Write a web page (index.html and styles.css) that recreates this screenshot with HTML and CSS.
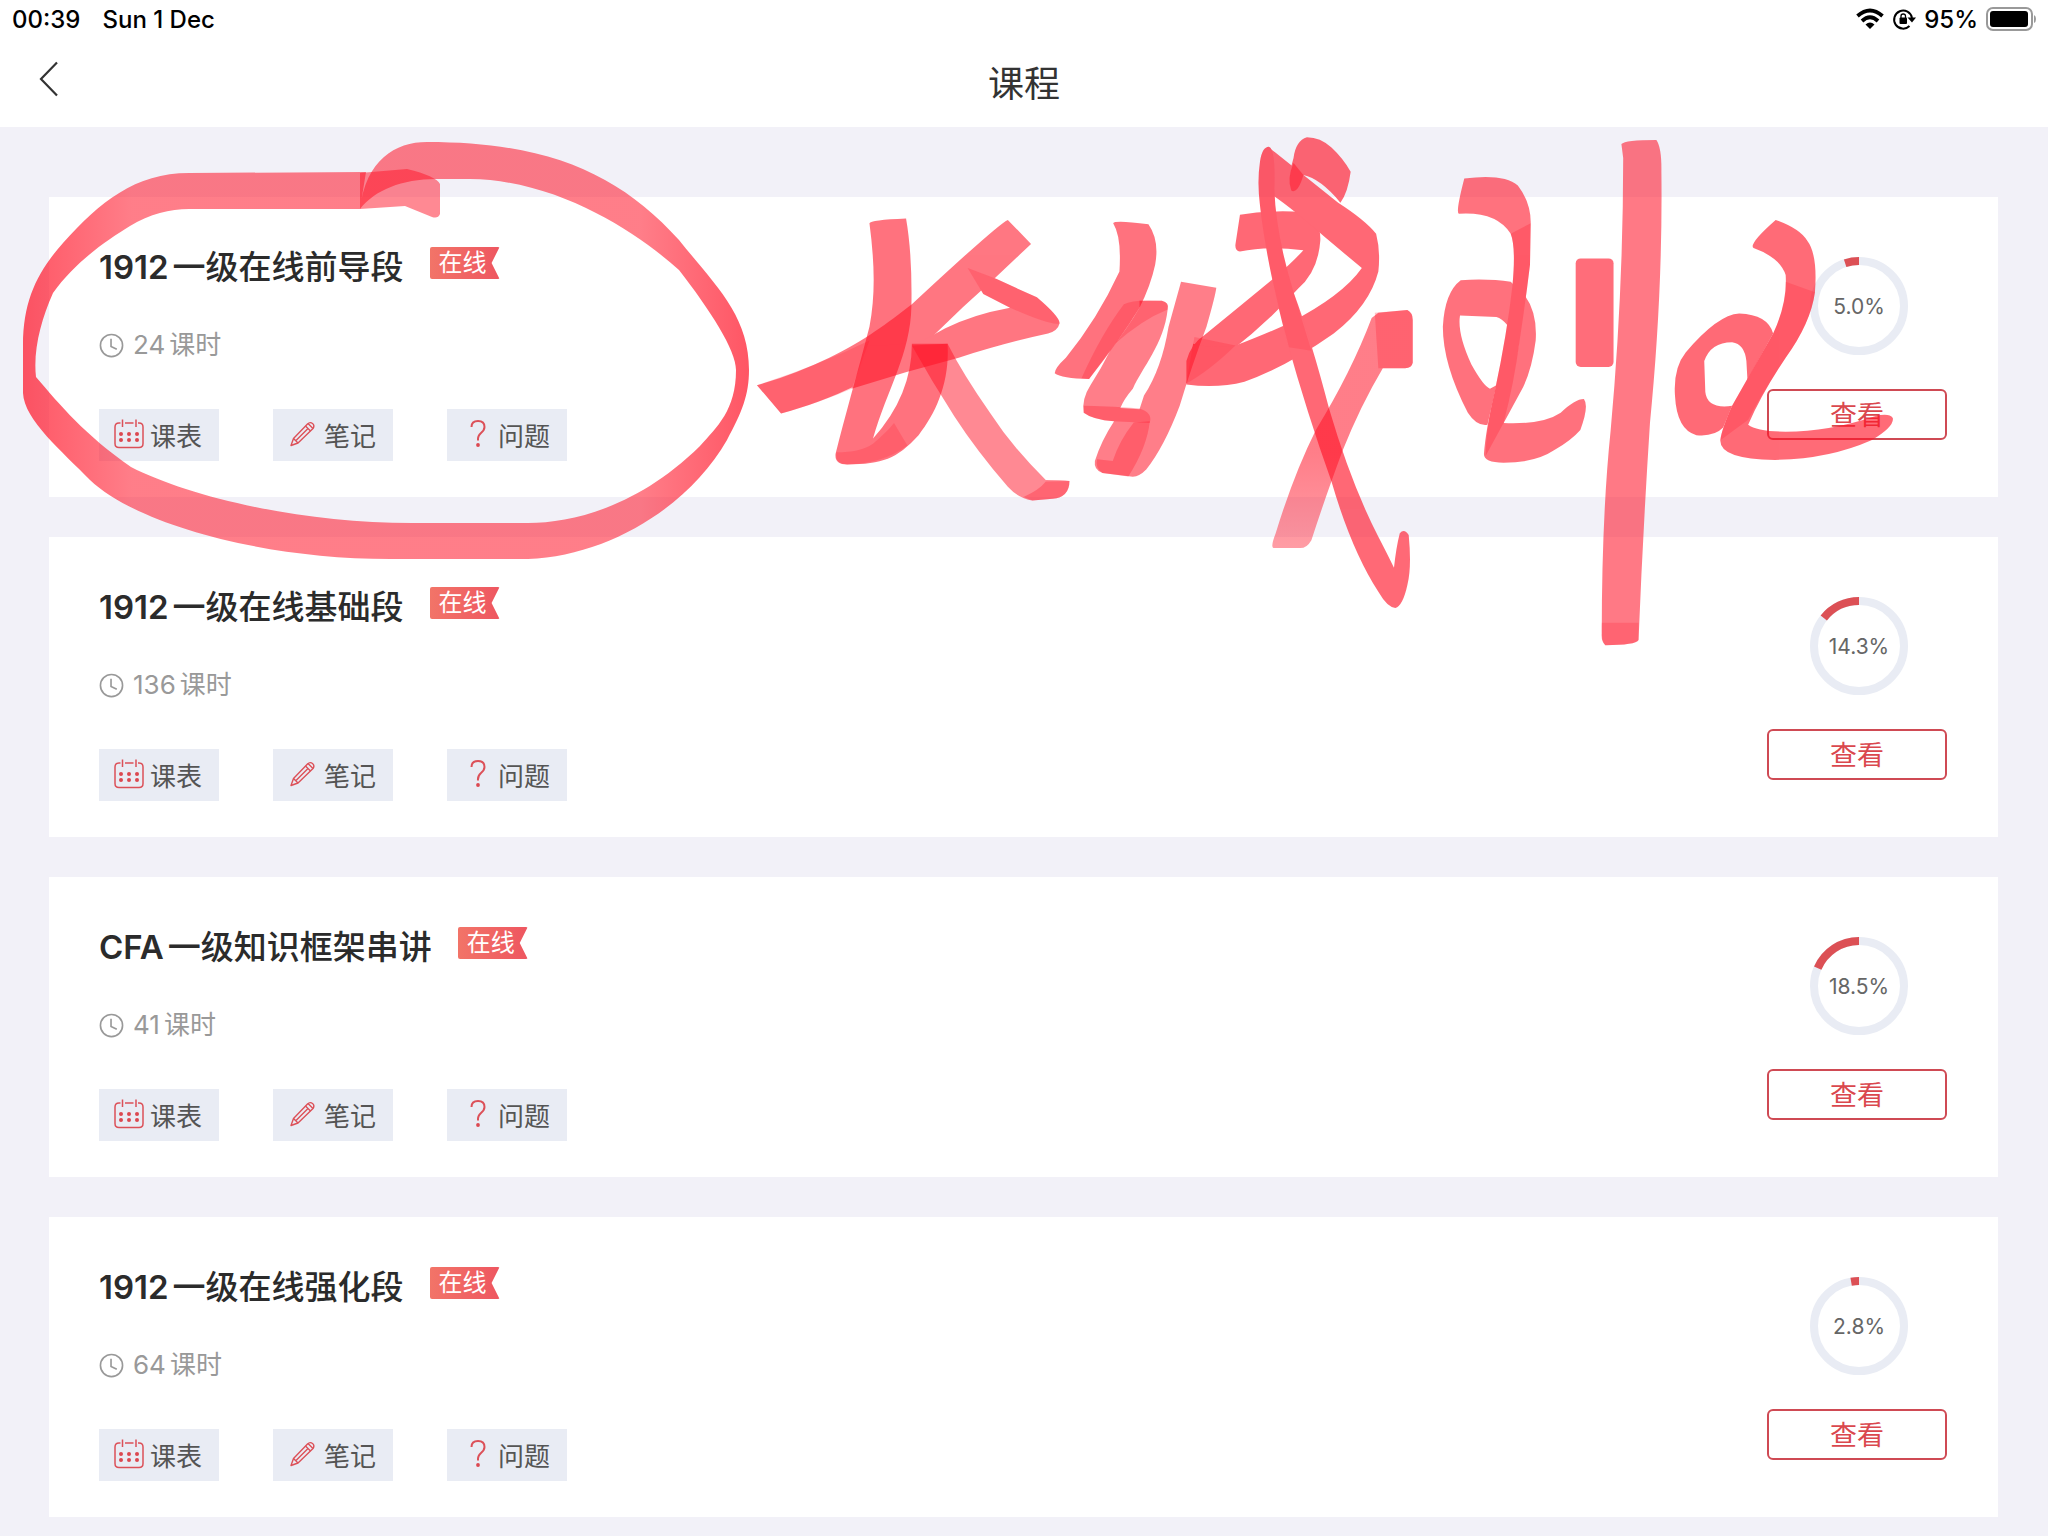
FILE: index.html
```html
<!DOCTYPE html>
<html lang="zh-CN">
<head>
<meta charset="utf-8">
<meta name="viewport" content="width=device-width, initial-scale=1">
<title>课程</title>
<link rel="stylesheet" href="styles.css">
</head>
<body>
<svg class="sprite" aria-hidden="true">
  <symbol id="i-clock" viewBox="0 0 26 26"><g fill="none" stroke="#999" stroke-width="1.7"><circle cx="13" cy="13" r="11.5"/><path d="M12.5 6v8l6 3"/></g></symbol>
  <symbol id="i-cal" viewBox="0 0 30 30"><path d="M6.500 4H5Q1 4 1 8v16.500q0 4 4 4h20q4 0 4-4V8q0-4-4-4h-1M11 4h8.500M8.500.500V8M22 .500V8" fill="none" stroke="#dc5058" stroke-width="1.500"/><g fill="#dc4850"><circle cx="7" cy="15" r="2"/><circle cx="15" cy="15" r="2"/><circle cx="23" cy="15" r="2"/><circle cx="7" cy="21" r="2"/><circle cx="15" cy="21" r="2"/><circle cx="23" cy="21" r="2"/></g></symbol>
  <symbol id="i-pen" viewBox="0 0 30 30"><g fill="none" stroke="#dc5058" stroke-width="1.400" stroke-linejoin="round"><path d="M3 26.500 5.500 19.500 19.500 5Q22 2.500 24.500 4.500T25 9.500L10 24Z"/><path d="M5.500 19.500 10 24M8 21.500 20 9.500M17.500 7l5 5M20 4.500l5 5"/></g></symbol>
  <symbol id="i-q" viewBox="0 0 30 30"><path d="M9.500 8Q9.500 2 16 2t6.500 6q0 3-3.500 6t-3 7.500" fill="none" stroke="#dc5058" stroke-width="2"/><circle cx="16" cy="26" r="1.900" fill="#dc4850"/></symbol>
</svg>

<header class="top">
  <div class="status">
    <span>00:39</span><span>Sun 1 Dec</span>
    <div class="status-right">
      <svg width="28" height="22" viewBox="0 0 28 22"><g fill="none" stroke="#000" stroke-width="3.800"><path d="M1.500 8Q14-3 26.500 8"/><path d="M6 13Q14 5.500 22 13"/></g><path d="M9.500 16.500Q14 12.500 18.500 16.500L14 21Z"/></svg>
      <svg width="24" height="24" viewBox="0 0 24 24"><path d="M17.500 19A9 9 0 1 1 20 11" fill="none" stroke="#000" stroke-width="2"/><path d="M15.500 10.500H24L20 15.500Z"/><rect x="7.500" y="10.500" width="7.500" height="6.500" rx="1"/><path d="M9 11V9q0-2 2.200-2T13.500 9v2" fill="none" stroke="#000" stroke-width="1.300"/></svg>
      <span>95%</span>
      <svg width="50" height="26" viewBox="0 0 50 26"><rect x="1" y="2" width="45" height="22" rx="6" fill="none" stroke="#999" stroke-width="2"/><rect x="4" y="5" width="38" height="16" rx="3"/><path d="M48 9q2 1 2 4t-2 4Z" fill="#999"/></svg>
    </div>
  </div>
  <nav class="nav">
    <button class="back" type="button" aria-label="返回"><svg width="20" height="36" viewBox="0 0 20 36"><path d="M18 1.500 2 18 18 34.500" fill="none" stroke="#333" stroke-width="2.200"/></svg></button>
    <h1>课程</h1>
  </nav>
</header>

<main class="list">
  <article class="card">
    <div class="info">
      <div class="head"><h2><span class="num">1912</span>一级在线前导段</h2><span class="tag">在线</span></div>
      <p class="hours"><svg class="clock"><use href="#i-clock"/></svg><span><span class="num">24</span>课时</span></p>
      <div class="actions">
        <button type="button"><svg><use href="#i-cal"/></svg>课表</button>
        <button type="button"><svg><use href="#i-pen"/></svg>笔记</button>
        <button type="button"><svg><use href="#i-q"/></svg>问题</button>
      </div>
    </div>
    <div class="side">
      <div class="ring"><svg viewBox="0 0 98 98"><circle class="track" cx="49" cy="49" r="45"/><circle class="bar" cx="49" cy="49" r="45" pathLength="100" stroke-dasharray="5 100" transform="matrix(0 -1 -1 0 98 98)"/></svg><span>5.0%</span></div>
      <button class="view" type="button">查看</button>
    </div>
  </article>
  <article class="card">
    <div class="info">
      <div class="head"><h2><span class="num">1912</span>一级在线基础段</h2><span class="tag">在线</span></div>
      <p class="hours"><svg class="clock"><use href="#i-clock"/></svg><span><span class="num">136</span>课时</span></p>
      <div class="actions">
        <button type="button"><svg><use href="#i-cal"/></svg>课表</button>
        <button type="button"><svg><use href="#i-pen"/></svg>笔记</button>
        <button type="button"><svg><use href="#i-q"/></svg>问题</button>
      </div>
    </div>
    <div class="side">
      <div class="ring"><svg viewBox="0 0 98 98"><circle class="track" cx="49" cy="49" r="45"/><circle class="bar" cx="49" cy="49" r="45" pathLength="100" stroke-dasharray="14.3 100" transform="matrix(0 -1 -1 0 98 98)"/></svg><span>14.3%</span></div>
      <button class="view" type="button">查看</button>
    </div>
  </article>
  <article class="card">
    <div class="info">
      <div class="head"><h2><span class="num">CFA</span>一级知识框架串讲</h2><span class="tag">在线</span></div>
      <p class="hours"><svg class="clock"><use href="#i-clock"/></svg><span><span class="num">41</span>课时</span></p>
      <div class="actions">
        <button type="button"><svg><use href="#i-cal"/></svg>课表</button>
        <button type="button"><svg><use href="#i-pen"/></svg>笔记</button>
        <button type="button"><svg><use href="#i-q"/></svg>问题</button>
      </div>
    </div>
    <div class="side">
      <div class="ring"><svg viewBox="0 0 98 98"><circle class="track" cx="49" cy="49" r="45"/><circle class="bar" cx="49" cy="49" r="45" pathLength="100" stroke-dasharray="18.5 100" transform="matrix(0 -1 -1 0 98 98)"/></svg><span>18.5%</span></div>
      <button class="view" type="button">查看</button>
    </div>
  </article>
  <article class="card">
    <div class="info">
      <div class="head"><h2><span class="num">1912</span>一级在线强化段</h2><span class="tag">在线</span></div>
      <p class="hours"><svg class="clock"><use href="#i-clock"/></svg><span><span class="num">64</span>课时</span></p>
      <div class="actions">
        <button type="button"><svg><use href="#i-cal"/></svg>课表</button>
        <button type="button"><svg><use href="#i-pen"/></svg>笔记</button>
        <button type="button"><svg><use href="#i-q"/></svg>问题</button>
      </div>
    </div>
    <div class="side">
      <div class="ring"><svg viewBox="0 0 98 98"><circle class="track" cx="49" cy="49" r="45"/><circle class="bar" cx="49" cy="49" r="45" pathLength="100" stroke-dasharray="2.8 100" transform="matrix(0 -1 -1 0 98 98)"/></svg><span>2.8%</span></div>
      <button class="view" type="button">查看</button>
    </div>
  </article>
</main>

<!-- Marker annotation over the first course -->
<svg class="ink" viewBox="0 0 2048 1536" aria-hidden="true">
  <defs>
    <linearGradient id="g-loop" x1="0" x2="1" y1="0" y2="0">
      <stop offset="0" stop-color="#ff1428" stop-opacity=".72"/><stop offset=".15" stop-color="#ff1428" stop-opacity=".55"/><stop offset=".85" stop-color="#ff1428" stop-opacity=".55"/><stop offset="1" stop-color="#ff1428" stop-opacity=".72"/>
    </linearGradient>
    <linearGradient id="g-fade" x1="0" x2="0" y1="0" y2="1">
      <stop offset="0" stop-color="#ff1428" stop-opacity=".38"/><stop offset=".4" stop-color="#ff1428" stop-opacity=".55"/>
    </linearGradient>
    <linearGradient id="g-leg" x1="0" x2="0" y1="0" y2="1">
      <stop offset=".6" stop-color="#ff1428" stop-opacity=".55"/><stop offset="1" stop-color="#ff1428" stop-opacity=".42"/>
    </linearGradient>
  </defs>
  <g>
    <path fill="url(#g-loop)" d="M366 172 L189 173 C135 173 100 202 63 243 C38 271 23 300 23 345 L23 393 C24 420 63 452 90 480 C135 523 260 559 390 559 L528 559 C610 556 690 505 727 440 C742 412 749 395 749 370 C749 315 715 285 679 240 C620 175 550 142 427 142 C395 142 366 160 360 209 C375 190 402 179 436 179 L470 179 C560 180 640 235 679 270 C710 310 736 350 736 370 C736 410 717 427 700 446 C640 505 575 523 528 523 L412 523 C300 523 190 497 131 467 C85 435 60 405 36 377 C33 350 41 320 53 293 C75 262 107 240 130 226 C150 214 170 209 189 209 L360 209 Z"/>
    <path fill-opacity=".5" d="M360 173 L407 169 Q436 176 440 184 L440 214 Q438 219 432 217 L405 206 L360 209Z"/>
  </g>
  <g transform="translate(740 120) scale(.4464 .3444)">
    <path fill-opacity=".6" d="M290 300 Q292 290 372 286 Q386 390 384 540 C382 680 330 780 298 925 Q385 800 385 650 L465 650 C470 760 440 850 400 915 C350 985 320 998 240 1000 Q212 1000 214 970 C235 860 262 740 290 600 C305 500 300 400 290 300Z"/>
    <path fill-opacity=".2" d="M216 965 Q270 965 298 940 Q330 905 345 880 L375 945 Q320 998 240 1000 Q212 1000 216 965Z"/>
    <g opacity=".58">
      <path d="M38 770 L92 852 C200 815 330 740 430 630 Q500 540 570 460 L652 360 L600 290 Q580 300 385 535 C330 590 280 640 200 690 Q120 740 38 770Z"/>
      <path d="M510 430 L575 462 L665 515 Q715 570 716 590 Q712 612 690 620 Q600 645 490 690 Q370 730 250 780 L290 655 Q360 655 410 640 L460 605 Q520 565 605 545 L545 505Z"/>
    </g>
    <path fill-opacity=".2" d="M510 430 L575 462 L665 515 Q715 570 716 590 Q700 600 605 545 L545 505Z"/>
    <path fill-opacity=".2" d="M38 770 L92 852 Q180 820 250 780 L290 640 Q180 710 38 770Z"/>
    <path fill-opacity=".5" d="M385 655 L465 650 Q500 740 560 850 Q610 950 685 1045 Q720 1045 738 1048 Q738 1095 700 1100 L655 1105 Q625 1100 600 1065 Q530 960 480 860 Q430 760 385 655Z"/>
    <path fill-opacity=".3" d="M635 1095 Q670 1075 685 1050 L738 1048 Q738 1095 700 1100 L655 1105Z"/>
    <path fill-opacity=".6" d="M836 300 Q840 290 915 303 Q940 350 930 420 Q920 480 895 545 Q850 640 782 752 Q720 750 705 735 Q705 720 730 690 Q800 580 850 440 Q855 340 836 300Z"/>
    <path fill-opacity=".55" d="M895 525 L945 525 Q962 530 958 550 C950 650 900 720 880 780 Q860 810 852 836 L895 840 L905 800 Q945 720 960 600 L988 470 L1067 487 Q1065 510 1045 600 Q1010 720 985 830 Q950 950 910 1015 Q895 1035 880 1036 L812 1025 Q792 1015 795 990 Q810 930 838 875 Q790 870 770 850 Q765 810 785 770 Q810 720 830 668 Q870 600 895 545Z"/>
    <path fill-opacity=".25" d="M860 535 Q880 520 945 525 Q962 530 958 550 Q900 580 840 650 L782 752 L765 750 Q810 620 860 535Z"/>
    <path fill-opacity=".3" d="M770 830 Q810 830 895 838 Q925 850 918 880 L838 875 Q790 870 770 850Z"/>
    <path fill-opacity=".3" d="M882 878 L918 875 Q912 950 870 1035 L812 1025 Q795 1010 800 985 L835 990 Q850 930 882 878Z"/>
    <g opacity=".64">
      <path d="M1120 275 Q1200 260 1260 268 Q1302 290 1300 350 Q1295 440 1250 490 Q1180 590 1100 670 Q1050 730 1000 765 L1000 700 Q1010 650 1040 625 Q1130 530 1200 455 Q1240 410 1262 378 Q1180 365 1120 382 Q1108 380 1110 360Z"/>
      <path d="M1182 78 L1200 95 L1340 240 Q1400 290 1425 330 Q1435 380 1430 440 Q1410 540 1330 620 Q1220 720 1130 760 Q1070 780 1000 768 L1015 650 Q1060 665 1110 655 Q1180 620 1230 590 Q1350 510 1393 430 L1310 340 Q1240 260 1195 220 L1165 150Z"/>
      <path d="M1345 240 Q1362 210 1368 150 Q1350 110 1325 80 Q1300 50 1270 50 Q1245 60 1240 110 Q1225 170 1235 205 Q1250 215 1262 160 Q1300 170 1345 240Z"/>
      <path d="M1165 120 Q1170 78 1185 78 Q1200 85 1197 200 Q1200 330 1240 500 Q1280 640 1320 840 Q1370 1060 1430 1210 Q1450 1260 1465 1300 Q1470 1240 1478 1200 Q1488 1185 1498 1205 Q1505 1300 1495 1350 Q1485 1410 1468 1417 Q1450 1415 1430 1370 Q1370 1250 1325 1050 Q1270 850 1225 640 Q1180 420 1165 250 Q1158 180 1165 120Z"/>
    </g>
    <path fill-opacity=".15" d="M1165 120 Q1170 78 1185 78 Q1200 85 1197 200 Q1200 330 1240 500 L1280 670 L1230 660 Q1180 420 1165 250 Q1158 180 1165 120Z"/>
    <path fill-opacity=".5" d="M1240 125 L1262 160 Q1250 215 1235 205 Q1225 170 1240 125Z"/>
    <path fill-opacity=".2" d="M1018 630 L1110 655 Q1050 730 1000 765Z"/>
    <path fill="url(#g-leg)" d="M1430 560 L1495 552 Q1507 560 1507 580 L1507 705 Q1505 720 1490 721 L1440 721 Q1390 830 1350 960 Q1310 1100 1280 1220 Q1270 1243 1255 1243 L1195 1243 Q1188 1240 1200 1200 Q1240 1030 1290 900 Q1370 730 1415 575Z"/>
    <path fill-opacity=".25" d="M1422 560 L1495 552 Q1507 560 1507 580 L1507 705 Q1505 720 1490 721 L1430 721Z"/>
  </g>
  <g transform="translate(1400 120) scale(.3571 .3444)">
    <g opacity=".6">
      <path d="M180 170 Q290 155 330 190 Q367 240 366 300 L364 420 Q350 540 335 640 Q320 760 290 880 Q400 885 450 850 Q490 810 515 810 Q530 830 505 900 Q480 930 430 960 Q380 995 290 995 Q235 995 235 970 Q240 900 265 790 Q300 620 315 480 Q325 370 310 330 Q270 265 165 272 Q155 270 180 170Z"/>
      <path d="M245 885 Q215 890 190 850 Q120 710 120 600 Q125 500 170 465 Q250 460 310 470 L350 510 Q385 560 380 640 Q370 720 345 775 L285 890 L240 950 Q250 850 300 760 Q330 690 332 650 Q300 580 270 572 L168 568 Q160 620 200 710 Q235 775 252 780 L270 770Z"/>
    </g>
    <path fill-opacity=".25" d="M366 300 L364 420 Q350 540 335 640 Q320 760 290 880 L240 975 Q240 900 265 790 Q300 620 315 480 Q325 370 310 330Z"/>
    <rect fill-opacity=".62" x="492" y="402" width="106" height="315" rx="14"/>
    <path fill-opacity=".57" d="M620 70 Q630 58 718 58 Q733 80 732 150 C735 400 722 650 700 880 Q680 1200 668 1510 Q660 1525 575 1525 Q563 1515 565 1490 Q565 1150 590 900 Q625 500 625 110Z"/>
    <path fill-opacity=".2" d="M565 1460 H668 V1510 Q660 1525 575 1525 Q563 1515 565 1460Z"/>
    <g opacity=".63">
      <path d="M1052 290 Q1120 315 1140 350 Q1170 390 1162 500 Q1150 590 1080 690 Q1010 800 975 885 Q1000 905 1080 905 Q1200 905 1330 860 Q1370 850 1380 865 Q1385 890 1320 930 Q1200 985 1050 987 Q895 985 897 930 Q900 900 930 830 Q990 720 1045 620 Q1085 530 1080 450 Q1065 400 990 372 Q975 360 1052 290Z"/>
      <path d="M1045 620 Q1030 565 950 562 Q890 565 800 675 Q765 720 770 800 Q775 900 830 915 Q880 920 905 893 L930 830 Q860 840 855 790 L852 700 Q870 645 930 645 Q965 650 970 700 L973 755Z"/>
    </g>
    <path fill-opacity=".2" d="M1162 500 Q1150 590 1080 690 Q1010 800 975 870 L897 930 Q900 900 930 830 Q990 720 1045 620 Q1085 530 1080 470Z"/>
  </g>
</svg>
</body>
</html>
```
FILE: styles.css
```css
* { box-sizing: border-box; }

body {
  margin: 0;
  position: relative;
  background: #f2f1f8;
  font-family: Inter, "Noto Sans CJK SC", sans-serif;
  color: #333;
}

h1, h2, p { margin: 0; }

button {
  font: inherit;
  border: 0;
  padding: 0;
  background: none;
}

svg { display: block; flex: none; }

.sprite { position: absolute; width: 0; height: 0; }

.top { height: 127px; background: #fff; }

.status {
  display: flex;
  align-items: center;
  gap: 22px;
  height: 38px;
  padding: 0 12px;
  font-size: 24px;
  font-weight: 500;
  color: #000;
}

.status-right {
  display: flex;
  align-items: center;
  gap: 8px;
  margin-left: auto;
}

.nav {
  display: grid;
  grid-template-columns: 80px 1fr 80px;
  align-items: center;
  height: 85px;
}

.back { padding: 0 0 3px 39px; }

.nav h1 {
  text-align: center;
  font-size: 36px;
  font-weight: 400;
}

.list {
  display: flex;
  flex-direction: column;
  gap: 40px;
  padding: 70px 50px 19px 49px;
}

.card {
  display: flex;
  justify-content: space-between;
  padding: 48px 51px 36px 50px;
  background: #fff;
}

.num { margin-right: 4px; }

.head { display: flex; gap: 26px; }

.head h2 {
  font-size: 33px;
  line-height: 44px;
  font-weight: 500;
  color: #2b2b2b;
}

.head .num { font-weight: 600; }

.tag {
  width: 70px;
  height: 32px;
  margin-top: 2px;
  padding-left: 9px;
  border-radius: 2px;
  background: linear-gradient(90deg, #f27468, #ee5660);
  clip-path: polygon(0 0, 100% 0, 62px 50%, 100% 100%, 0 100%);
  color: #fff;
  font-size: 24px;
  line-height: 32px;
}

.hours {
  display: flex;
  align-items: center;
  gap: 9px;
  margin-top: 38px;
  height: 36px;
  font-size: 26px;
  line-height: 36px;
  color: #999;
}

.clock { width: 25px; height: 25px; }

.actions {
  display: flex;
  gap: 54px;
  margin-top: 46px;
}

.actions button {
  display: flex;
  align-items: center;
  gap: 6px;
  width: 120px;
  height: 52px;
  padding: 0 0 2px 15px;
  background: #e9ecf4;
  color: #555;
  font-size: 26px;
}

.actions svg { width: 30px; height: 30px; }

.side {
  display: flex;
  flex-direction: column;
  align-items: center;
  gap: 34px;
  padding-top: 12px;
}

.ring {
  display: grid;
  place-items: center;
  width: 98px;
  height: 98px;
  margin-left: 4px;
  font-size: 21px;
  color: #666;
}

.ring > * { grid-area: 1 / 1; }
.track, .bar { fill: none; stroke-width: 8; }
.track { stroke: #e9ecf4; }
.bar { stroke: #dc5055; }

.view {
  width: 180px;
  height: 51px;
  padding-bottom: 2px;
  border: 2px solid #cf4a54;
  border-radius: 6px;
  color: #da484e;
  font-size: 27px;
}

.ink {
  position: absolute;
  top: 0;
  left: 0;
  width: 100%;
  fill: #ff1428;
  pointer-events: none;
}
```
